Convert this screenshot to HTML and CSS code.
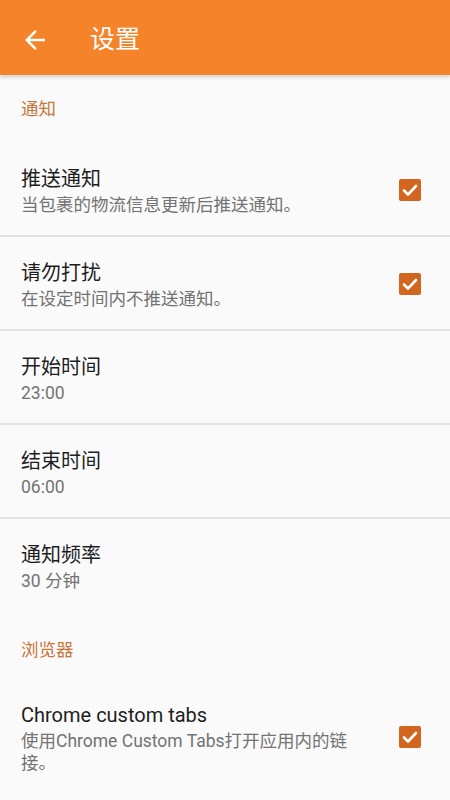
FILE: index.html
```html
<!DOCTYPE html>
<html lang="zh-CN">
<head>
<meta charset="utf-8">
<title>设置</title>
<link rel="stylesheet" href="styles.css">
</head>
<body>
<header class="appbar">
  <span class="back">
    <svg width="30" height="30" viewBox="0 0 24 24"><path d="M20 11H7.83l5.59-5.59L12 4l-8 8 8 8 1.41-1.41L7.83 13H20v-2z" fill="#fff"/></svg>
  </span>
  <h1 class="title">设置</h1>
</header>
<main class="list">
  <div class="category">通知</div>
  <div class="row">
    <div class="text">
      <div class="t">推送通知</div>
      <div class="s">当包裹的物流信息更新后推送通知。</div>
    </div>
    <span class="check"><svg width="22" height="22" viewBox="0 0 22 22"><path d="M5 11.5l4 4 8-8.5" fill="none" stroke="#fff" stroke-width="2.6" stroke-linecap="round" stroke-linejoin="round"/></svg></span>
  </div>
  <div class="row">
    <div class="text">
      <div class="t">请勿打扰</div>
      <div class="s">在设定时间内不推送通知。</div>
    </div>
    <span class="check"><svg width="22" height="22" viewBox="0 0 22 22"><path d="M5 11.5l4 4 8-8.5" fill="none" stroke="#fff" stroke-width="2.6" stroke-linecap="round" stroke-linejoin="round"/></svg></span>
  </div>
  <div class="row">
    <div class="text">
      <div class="t">开始时间</div>
      <div class="s">23:00</div>
    </div>
  </div>
  <div class="row">
    <div class="text">
      <div class="t">结束时间</div>
      <div class="s">06:00</div>
    </div>
  </div>
  <div class="row last">
    <div class="text">
      <div class="t">通知频率</div>
      <div class="s">30 分钟</div>
    </div>
  </div>
  <div class="category second">浏览器</div>
  <div class="row last">
    <div class="text narrow">
      <div class="t">Chrome custom tabs</div>
      <div class="s">使用Chrome Custom Tabs打开应用内的链接。</div>
    </div>
    <span class="check"><svg width="22" height="22" viewBox="0 0 22 22"><path d="M5 11.5l4 4 8-8.5" fill="none" stroke="#fff" stroke-width="2.6" stroke-linecap="round" stroke-linejoin="round"/></svg></span>
  </div>
</main>
</body>
</html>
```
FILE: styles.css
```css
html, body {
  margin: 0;
  padding: 0;
}
body {
  width: 450px;
  height: 800px;
  overflow: hidden;
  background: #fafafa;
  font-family: Roboto, "Noto Sans CJK SC", sans-serif;
}
.appbar {
  position: relative;
  z-index: 1;
  height: 75px;
  box-sizing: border-box;
  padding-top: 5px;
  background: #f5832a;
  display: flex;
  align-items: center;
  box-shadow: 0 2px 4px rgba(0,0,0,0.18);
}
.back {
  width: 30px;
  height: 30px;
  margin-left: 20px;
  display: flex;
}
.title {
  margin: 0 0 0 40px;
  font-size: 25px;
  font-weight: 400;
  color: #fff;
  line-height: 30px;
}
.list {
  display: flex;
  flex-direction: column;
}
.category {
  padding: 24px 20px 24px 21px;
  font-size: 17.5px;
  line-height: 20px;
  color: #c8773a;
}
.category.second {
  padding-top: 29px;
  padding-bottom: 19px;
}
.row {
  display: flex;
  align-items: center;
  padding: 21px 29px 19px 21px;
  border-bottom: 2px solid #e2e2e2;
}
.row.last {
  border-bottom: none;
}
.text {
  flex: 1;
  min-width: 0;
}
.text.narrow {
  flex: none;
  width: 330px;
  margin-right: auto;
}
.t {
  font-size: 20px;
  line-height: 30px;
  color: #1e1e1e;
}
.s {
  font-size: 17.5px;
  line-height: 22px;
  color: #737373;
}
.check {
  width: 22px;
  height: 22px;
  border-radius: 2px;
  background: #d2661e;
  display: flex;
  flex: none;
}
```
